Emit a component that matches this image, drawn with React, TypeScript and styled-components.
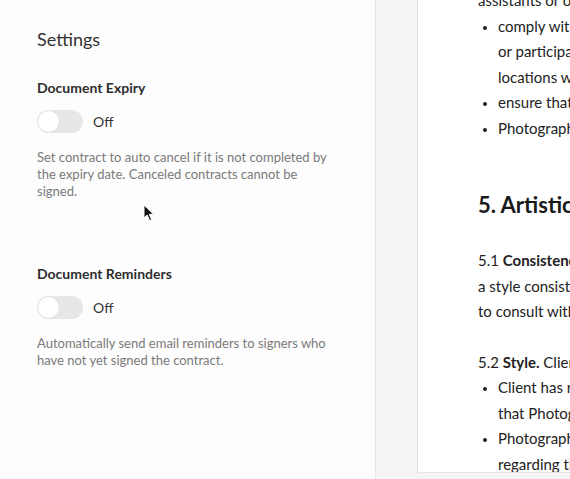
import React from 'react';
import styled, { createGlobalStyle } from 'styled-components';

const GlobalStyle = createGlobalStyle`
    html, body {
        margin: 0;
        padding: 0;
        overflow: hidden;
    }
    body {
        font-family: Lato, "Open Sans", Arial, sans-serif;
        -webkit-font-smoothing: antialiased;
    }
`;

const Screen = styled.div`
    display: flex;
    width: 570px;
    height: 479px;
    overflow: hidden;
    background-color: #f4f4f6;
    position: relative;
`;

const SettingsPanel = styled.aside`
    flex: 0 0 376px;
    box-sizing: border-box;
    height: 100%;
    background-color: #fdfdfd;
    border-right: 1px solid #e6e6e8;
    padding: 28px 37px 0 37px;
`;

const PanelTitle = styled.h2`
    margin: 0 0 29px 0;
    font-size: 18px;
    font-weight: 400;
    color: #333;
    line-height: 22px;
`;

const Section = styled.section`
    margin-bottom: 65px;
`;

const SectionTitle = styled.h3`
    margin: 0 0 13px 0;
    font-size: 14px;
    font-weight: 700;
    color: #2e2e2e;
    line-height: 18px;
`;

const ToggleRow = styled.div`
    display: flex;
    align-items: center;
    gap: 10px;
    margin-bottom: 16px;
`;

const Track = styled.span`
    position: relative;
    display: inline-block;
    width: 46px;
    height: 23px;
    border-radius: 12px;
    background-color: #e7e7e9;
`;

const Knob = styled.span`
    position: absolute;
    left: 1px;
    top: 1px;
    width: 21px;
    height: 21px;
    border-radius: 50%;
    background-color: #fff;
    box-shadow: 0 0 1px rgba(0, 0, 0, 0.12);
`;

const ToggleLabel = styled.span`
    font-size: 14px;
    color: #333;
`;

const Description = styled.p`
    margin: 0;
    width: 295px;
    font-size: 13px;
    line-height: 17px;
    color: #7a7a7a;
`;

const Workspace = styled.main`
    flex: 1;
    display: flex;
    padding-left: 41px;
    height: 473px;
`;

const Page = styled.div`
    flex: 0 0 600px;
    background-color: #fff;
    border-left: 1px solid #e3e3e5;
    border-bottom: 1px solid #e3e3e5;
    padding: 0 0 0 60px;
    overflow: hidden;
`;

const PageContent = styled.div`
    margin-top: -12px;
    font-size: 15px;
    color: #222;
    line-height: 25.5px;
    white-space: nowrap;
`;

const Line = styled.div``;

const BulletList = styled.ul`
    margin: 0;
    padding-left: 20px;
`;

const Bullet = styled.li`
    &::marker {
        font-size: 13px;
    }
`;

const Heading = styled.h1`
    margin: 50px 0 29px 0;
    font-size: 22px;
    font-weight: 700;
    color: #1a1a1a;
    line-height: 28px;
`;

const Para = styled.div<{ gap?: number }>`
    margin-bottom: ${props => props.gap ?? 0}px;
`;

const Cursor = styled.svg`
    position: absolute;
    left: 143px;
    top: 204px;
`;

function Toggle() {
    return (
        <ToggleRow>
            <Track>
                <Knob />
            </Track>
            <ToggleLabel>Off</ToggleLabel>
        </ToggleRow>
    );
}

export default function App() {
    return (
        <Screen>
            <GlobalStyle />
            <SettingsPanel>
                <PanelTitle>Settings</PanelTitle>
                <Section>
                    <SectionTitle>Document Expiry</SectionTitle>
                    <Toggle />
                    <Description>
                        Set contract to auto cancel if it is not completed by the expiry date. Canceled contracts cannot be signed.
                    </Description>
                </Section>
                <Section>
                    <SectionTitle>Document Reminders</SectionTitle>
                    <Toggle />
                    <Description>
                        Automatically send email reminders to signers who have not yet signed the contract.
                    </Description>
                </Section>
            </SettingsPanel>
            <Workspace>
                <Page>
                    <PageContent>
                        <Line>assistants or other personnel, Client shall:</Line>
                        <BulletList>
                            <Bullet>comply with all rules and regulations</Bullet>
                            <Line>or participants at the venue and event</Line>
                            <Line>locations while the event is in progress;</Line>
                            <Bullet>ensure that all guests are informed;</Bullet>
                            <Bullet>Photographer shall not be responsible.</Bullet>
                        </BulletList>
                        <Heading>5. Artistic Release</Heading>
                        <Para gap={25}>
                            <Line>5.1 <b>Consistency.</b> Photographer will use</Line>
                            <Line>a style consistent with their portfolio and</Line>
                            <Line>to consult with Client as needed.</Line>
                        </Para>
                        <Para>
                            <Line>5.2 <b>Style.</b> Client acknowledges that:</Line>
                            <BulletList>
                                <Bullet>Client has reviewed the portfolio and</Bullet>
                                <Line>that Photographer's style is accepted;</Line>
                                <Bullet>Photographer has full discretion</Bullet>
                                <Line>regarding the final selection of images.</Line>
                            </BulletList>
                        </Para>
                    </PageContent>
                </Page>
            </Workspace>
            <Cursor width="12" height="18" viewBox="0 0 12 18">
                <path d="M1 1 L1 14 L4.2 11 L6.6 16.6 L8.6 15.7 L6.3 10.3 L10.6 10.3 Z" fill="#111" stroke="#fff" strokeWidth="1" strokeLinejoin="round" />
            </Cursor>
        </Screen>
    );
}
